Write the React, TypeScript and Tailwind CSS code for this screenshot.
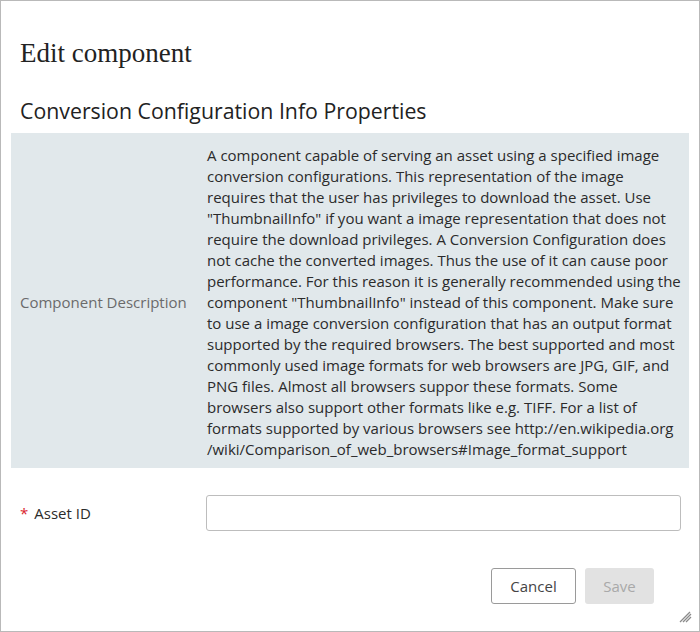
import React from "react";

const descriptionLines = [
  "A component capable of serving an asset using a specified image",
  "conversion configurations. This representation of the image",
  "requires that the user has privileges to download the asset. Use",
  "\"ThumbnailInfo\" if you want a image representation that does not",
  "require the download privileges. A Conversion Configuration does",
  "not cache the converted images. Thus the use of it can cause poor",
  "performance. For this reason it is generally recommended using the",
  "component \"ThumbnailInfo\" instead of this component. Make sure",
  "to use a image conversion configuration that has an output format",
  "supported by the required browsers. The best supported and most",
  "commonly used image formats for web browsers are JPG, GIF, and",
  "PNG files. Almost all browsers suppor these formats. Some",
  "browsers also support other formats like e.g. TIFF. For a list of",
  "formats supported by various browsers see http://en.wikipedia.org",
  "/wiki/Comparison_of_web_browsers#Image_format_support",
];

function ResizeHandle() {
  return (
    <svg width="14" height="14" viewBox="0 0 14 14" className="absolute right-[7px] bottom-[8px]">
      <path d="M2 13 L12 3 M5 13 L13 5 M8 13 L13 8" stroke="#8a8a8a" strokeWidth="1.3" />
    </svg>
  );
}

export default function App() {
  return (
    <div
      className="relative w-[700px] h-[632px] bg-white border border-[#b9b9b9] text-[#333] overflow-hidden"
      style={{ fontFamily: '"Open Sans", "Noto Sans", sans-serif' }}
    >
      <div className="px-[10px]">
        <h1
          className="pl-[9px] pt-[35px] text-[27px] leading-[34px] text-[#222]"
          style={{ fontFamily: '"Liberation Serif", serif' }}
        >
          Edit component
        </h1>
        <h2 className="pl-[9px] mt-[26px] text-[21.3px] leading-[30px] text-[#222]">
          Conversion Configuration Info Properties
        </h2>

        <div className="mt-[7px] flex bg-[#e1e8eb]">
          <div className="w-[196px] shrink-0 flex items-center pl-[9px] pt-[3px] text-[15px] text-[#6b6b6b]">
            Component Description
          </div>
          <div className="pt-[12px] pb-[8px] text-[15px] leading-[21px] text-[#2b2b2b] whitespace-nowrap">
            {descriptionLines.map((line, i) => (
              <div key={i}>{line}</div>
            ))}
          </div>
        </div>

        <div className="mt-[27px] flex items-center">
          <div className="w-[195px] shrink-0 pl-[9px] text-[15px] text-[#2b2b2b]">
            <span className="text-[#d9232d] mr-[6px]">*</span>
            Asset ID
          </div>
          <input
            type="text"
            className="w-[475px] h-[36px] border border-[#bdbdbd] rounded-[3px] bg-white px-2 outline-none"
          />
        </div>

        <div className="mt-[37px] flex justify-end gap-[9px] pr-[35px]">
          <button className="w-[85px] h-[36px] border border-[#9a9a9a] rounded-[3px] bg-white text-[15px] text-[#444]">
            Cancel
          </button>
          <button
            disabled
            className="w-[69px] h-[36px] rounded-[3px] bg-[#e2e2e2] text-[15px] text-[#a9a9a9]"
          >
            Save
          </button>
        </div>
      </div>
      <ResizeHandle />
    </div>
  );
}
